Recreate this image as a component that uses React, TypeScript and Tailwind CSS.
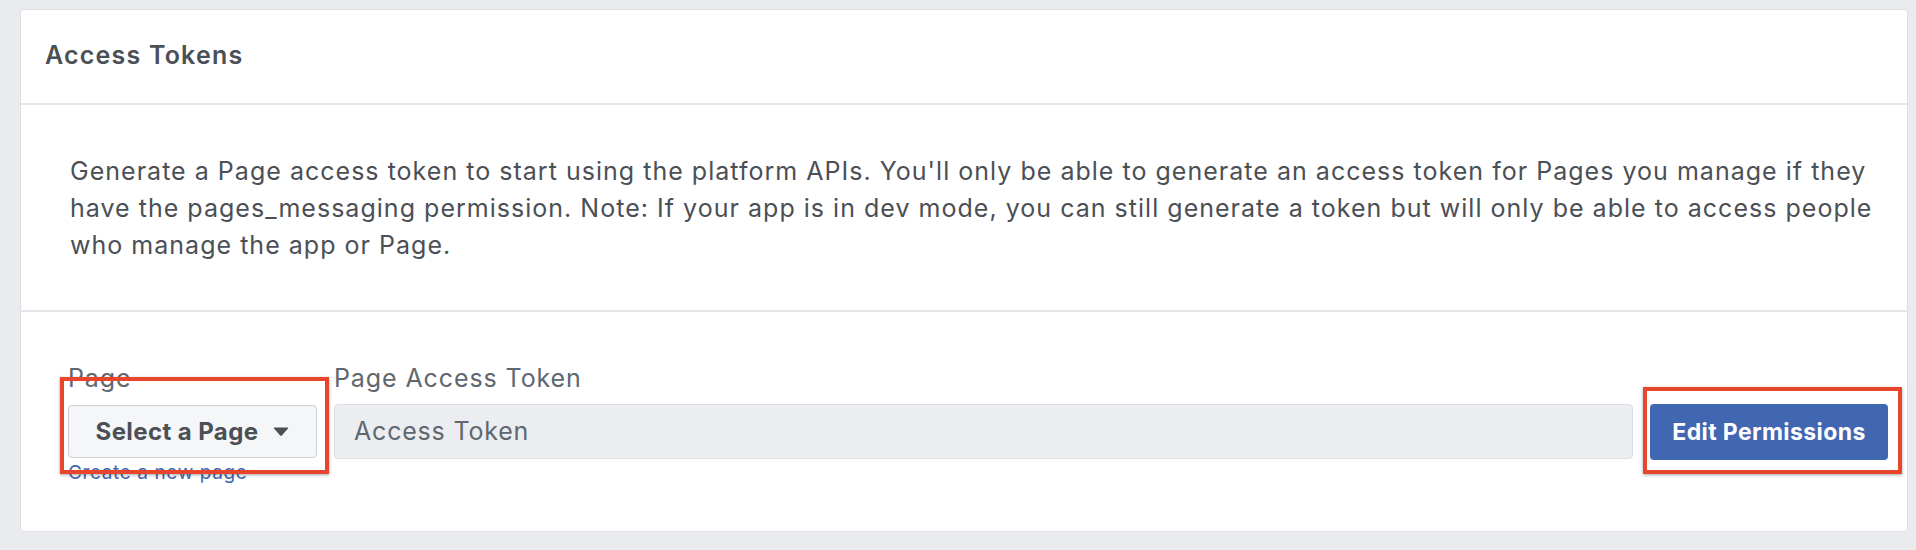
import React from 'react';

const FONT = "font-['Inter','Liberation_Sans',sans-serif]";

const Caret = () => (
  <svg width="16" height="10" viewBox="0 0 16 10" className="ml-[15px]">
    <path d="M1 1.5 Q0.2 0.5 1.6 0.5 H14.4 Q15.8 0.5 15 1.5 L8.8 8.6 Q8 9.5 7.2 8.6 Z" fill="#4b4f56" />
  </svg>
);

export default function App() {
  return (
    <div className={`${FONT} bg-[#e9ebee] h-[550px] w-full overflow-hidden pt-[9px] pl-[20px] pr-[8px]`}>
      {/* Card */}
      <div className="relative bg-white border border-[#dddfe2] rounded-[4px] h-[523px] flex flex-col">
        {/* Header */}
        <div className="h-[95px] border-b-2 border-[#e5e6e9] flex items-center pl-[24px] pb-[2px]">
          <h2 className="text-[25px] font-semibold text-[#4b4f56] tracking-[1.2px]">Access Tokens</h2>
        </div>

        {/* Description */}
        <div className="h-[207px] border-b-2 border-[#e5e6e9] pl-[49px] pr-[20px] pt-[48px]">
          <p className="text-[25px] leading-[37px] tracking-[1.02px] text-[#4b4f56]">
            Generate a Page access token to start using the platform APIs. You'll only be able to generate an access token for Pages you manage if they have the pages_messaging permission. Note: If your app is in dev mode, you can still generate a token but will only be able to access people who manage the app or Page.
          </p>
        </div>

        {/* Form row */}
        <div className="flex-1 flex items-start gap-[17px] pl-[47px] pr-[19px] pt-[48px]">
          <div className="flex flex-col w-[249px]">
            <label className="text-[25px] leading-[36px] tracking-[0.9px] text-[#606770]">Page</label>
            <button className="mt-[9px] h-[53px] w-full flex items-center justify-center bg-[#f5f6f7] border border-[#ccd0d5] rounded-[4px] text-[24px] tracking-[0.4px] font-bold text-[#4b4f56]">
              Select a Page
              <Caret />
            </button>
            <a href="#" className="mt-[3px] text-[19px] leading-[24px] tracking-[0.6px] text-[#4267b2]">Create a new page</a>
          </div>
          <div className="flex flex-col flex-1">
            <label className="text-[25px] leading-[36px] tracking-[0.9px] text-[#606770]">Page Access Token</label>
            <div className="mt-[8px] h-[55px] flex items-center bg-[#ebedf0] border border-[#dddfe2] rounded-[4px] pl-[19px] text-[25px] tracking-[0.8px] text-[#606770]">
              Access Token
            </div>
          </div>
          <div className="pt-[44px]">
            <button className="h-[56px] w-[238px] bg-[#4267b2] rounded-[4px] text-white text-[23px] tracking-[0.4px] font-bold">
              Edit Permissions
            </button>
          </div>
        </div>

        {/* Annotation boxes */}
        <div className="absolute left-[39px] top-[367px] w-[269px] h-[97px] border-[4px] border-[#e8452c] shadow-[0_1px_3px_rgba(0,0,0,0.35)]" />
        <div className="absolute left-[1622px] top-[377px] w-[259px] h-[87px] border-[4px] border-[#e8452c] shadow-[0_1px_3px_rgba(0,0,0,0.35)]" />
      </div>
    </div>
  );
}
